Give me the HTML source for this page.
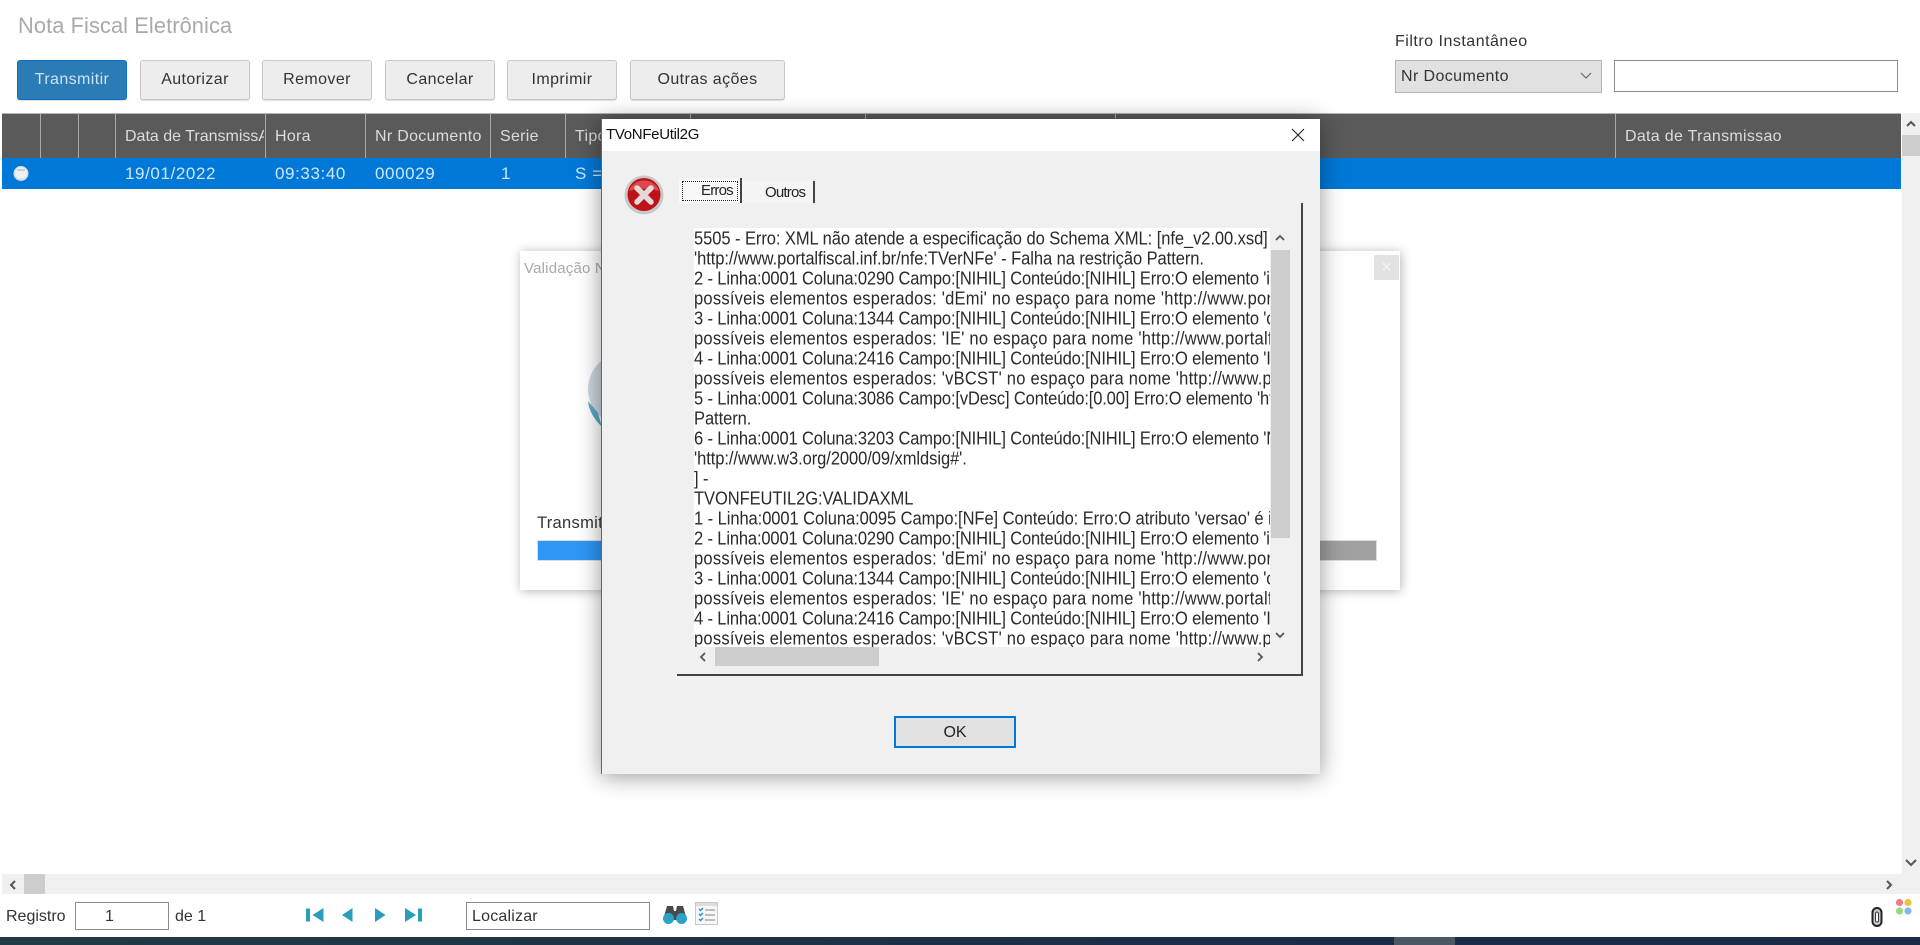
<!DOCTYPE html>
<html><head><meta charset="utf-8"><title>Nota Fiscal Eletrônica</title>
<style>
html,body{margin:0;padding:0;width:1920px;height:945px;overflow:hidden;background:#fff}
body{font-family:"Liberation Sans",Arial,sans-serif;position:relative;filter:blur(.35px)}
.a{position:absolute;white-space:nowrap}
.btn{position:absolute;top:60px;height:38px;line-height:37px;text-align:center;background:#ededed;border:1px solid #c8c8c8;border-radius:3px;box-shadow:0 1px 1px #ddd;font-size:16px;color:#333;box-sizing:content-box;letter-spacing:.4px}
.h{position:absolute;top:114px;height:44px;line-height:46px;font-size:16px;color:#dcdcdc;white-space:nowrap;overflow:hidden;letter-spacing:.3px}
.sep{position:absolute;top:114px;height:44px;width:1px;background:#a8a8a8}
.c{position:absolute;top:158px;height:31px;line-height:32px;font-size:17px;color:#cfe6fa;white-space:nowrap;letter-spacing:.6px}
.ln{position:absolute;left:0;width:576px;height:20px;line-height:20px;font-size:16.5px;letter-spacing:-.06px;color:#2a2a2a;white-space:nowrap;overflow:hidden}
.ln span{display:inline-block;transform:scaleY(1.1);transform-origin:50% 55%}
.l1{letter-spacing:-.14px}
.l2{letter-spacing:.24px}
</style></head><body>

<div class="a" style="left:18px;top:13px;font-size:21.8px;line-height:26px;color:#a9a9a9;letter-spacing:.1px">Nota Fiscal Eletrônica</div>

<div class="btn" style="left:17px;width:108px;background:#2a7bb6;border-color:#0f6cc4;color:#cfe3f2">Transmitir</div>
<div class="btn" style="left:140px;width:108px">Autorizar</div>
<div class="btn" style="left:262px;width:108px">Remover</div>
<div class="btn" style="left:385px;width:108px">Cancelar</div>
<div class="btn" style="left:507px;width:108px">Imprimir</div>
<div class="btn" style="left:630px;width:153px">Outras ações</div>

<div class="a" style="left:1395px;top:32px;font-size:16px;line-height:20px;color:#333;letter-spacing:.5px">Filtro Instantâneo</div>
<div class="a" style="left:1395px;top:60px;width:205px;height:31px;background:#e1e1e1;border:1px solid #b4b4b4;font-size:16px;line-height:31px;color:#333;text-indent:5px;letter-spacing:.4px">Nr Documento</div>
<svg class="a" style="left:1579px;top:70px" width="14" height="12"><path d="M2 3l5 5 5-5" fill="none" stroke="#666" stroke-width="1.2"/></svg>
<div class="a" style="left:1614px;top:60px;width:282px;height:30px;background:#fff;border:1.5px solid #8d8d8d"></div>

<!-- Grid -->
<div class="a" style="left:2px;top:113px;width:1899px;height:1px;background:#b5b5b5"></div>
<div class="a" style="left:2px;top:114px;width:1899px;height:44px;background:#5a5a5a"></div>
<div class="a" style="left:2px;top:158px;width:1899px;height:31px;background:#0078d7"></div>
<div class="sep" style="left:40px"></div><div class="sep" style="left:78px"></div><div class="sep" style="left:115px"></div><div class="sep" style="left:265px"></div><div class="sep" style="left:365px"></div><div class="sep" style="left:490px"></div><div class="sep" style="left:565px"></div><div class="sep" style="left:690px"></div><div class="sep" style="left:865px"></div><div class="sep" style="left:1115px"></div><div class="sep" style="left:1615px"></div>

<div class="h" style="left:125px;width:139px;letter-spacing:0">Data de TransmissAo</div>
<div class="h" style="left:275px;width:85px">Hora</div>
<div class="h" style="left:375px;width:114px">Nr Documento</div>
<div class="h" style="left:500px;width:60px">Serie</div>
<div class="h" style="left:575px;width:100px">Tipo</div>
<div class="h" style="left:1625px;width:250px">Data de Transmissao</div>

<svg class="a" style="left:11px;top:164px" width="20" height="20"><circle cx="10" cy="9.500" r="7.500" fill="#d8dde2"/><circle cx="10" cy="9" r="6" fill="#eef0f2"/><path d="M6 6h8" stroke="#a8b0b8" stroke-width="1"/></svg>
<div class="c" style="left:125px">19/01/2022</div>
<div class="c" style="left:275px">09:33:40</div>
<div class="c" style="left:375px">000029</div>
<div class="c" style="left:501px">1</div>
<div class="c" style="left:575px">S = S</div>

<!-- main scrollbars -->
<div class="a" style="left:1902px;top:113px;width:18px;height:761px;background:#f0f0f0"></div>
<div class="a" style="left:1902px;top:135px;width:18px;height:21px;background:#cdcdcd"></div>
<svg class="a" style="left:1904px;top:118px" width="14" height="12"><path d="M3 8l4-4 4 4" fill="none" stroke="#555" stroke-width="2"/></svg>
<svg class="a" style="left:1902px;top:857px" width="18" height="12"><path d="M4 3l5 5 5-5" fill="none" stroke="#555" stroke-width="2"/></svg>
<div class="a" style="left:2px;top:874px;width:1918px;height:20px;background:#f0f0f0"></div>
<div class="a" style="left:24px;top:874px;width:21px;height:20px;background:#cdcdcd"></div>
<svg class="a" style="left:6px;top:878px" width="14" height="14"><path d="M9 3L5 7l4 4" fill="none" stroke="#555" stroke-width="2"/></svg>
<svg class="a" style="left:1882px;top:878px" width="14" height="14"><path d="M5 3l4 4-4 4" fill="none" stroke="#555" stroke-width="2"/></svg>

<!-- footer -->
<div class="a" style="left:6px;top:907px;font-size:16px;line-height:20px;color:#333">Registro</div>
<div class="a" style="left:75px;top:902px;width:92px;height:26px;border:1px solid #8a8a8a;font-size:16px;line-height:28px;color:#333;text-indent:29px">1</div>
<div class="a" style="left:175px;top:907px;font-size:16px;line-height:20px;color:#333">de 1</div>
<svg class="a" style="left:300px;top:902px" width="130" height="26" viewBox="0 0 130 26">
<g fill="#2a9cbc"><rect x="6" y="6.500" width="4" height="13"/><path d="M23.500 6v14l-11-7z"/><path d="M52.500 6v14l-10.500-7z"/><path d="M75 6v14l10.500-7z"/><path d="M105 6v14l11-7z"/><rect x="118" y="6.500" width="4" height="13"/></g></svg>
<div class="a" style="left:466px;top:902px;width:182px;height:26px;border:1px solid #8a8a8a;font-size:16px;line-height:27px;color:#333;text-indent:5px;letter-spacing:.2px">Localizar</div>
<svg class="a" style="left:662px;top:902px" width="26" height="24" viewBox="0 0 26 24">
<path d="M5 4h6l1 5h2l1-5h6l4 14H1z" fill="#4a4a4e"/><circle cx="6.500" cy="16.500" r="5.500" fill="#2ba3c4"/><circle cx="19.500" cy="16.500" r="5.500" fill="#2ba3c4"/></svg>
<svg class="a" style="left:695px;top:902px" width="24" height="24" viewBox="0 0 24 24">
<rect x=".5" y=".5" width="22" height="22" fill="#f7f7f7" stroke="#c8c8c8"/><rect x="1" y="1" width="21" height="3" fill="#dcdcdc"/>
<path d="M4 7l1.500 1.500L8 6M4 12l1.500 1.500L8 11M4 17l1.500 1.500L8 16" fill="none" stroke="#2a90c8" stroke-width="1.500"/>
<path d="M10 8h10M10 13h10M10 18h10" stroke="#9a9a9a" stroke-width="1.200"/></svg>
<svg class="a" style="left:1870px;top:906px" width="14" height="22" viewBox="0 0 14 22">
<rect x="2.500" y="2" width="9" height="18" rx="4.500" fill="#c9cdd6" stroke="#222" stroke-width="2"/><rect x="5.500" y="6" width="3" height="10" rx="1.500" fill="#fff" stroke="#333"/></svg>
<svg class="a" style="left:1895px;top:898px" width="18" height="18" viewBox="0 0 18 18">
<circle cx="4.500" cy="4.500" r="3.600" fill="#ea7f86"/><circle cx="13" cy="4.500" r="3.600" fill="#efc23e"/><circle cx="4.500" cy="13" r="3.600" fill="#9bd67e"/><circle cx="13" cy="13" r="3.600" fill="#82b8e2"/></svg>
<div class="a" style="left:0;top:937px;width:1920px;height:8px;background:linear-gradient(90deg,#213a45,#1b2e45 60%,#1a2a47)"></div>
<div class="a" style="left:1394px;top:937px;width:61px;height:8px;background:#4a5866"></div>

<!-- background modal -->
<div class="a" style="left:520px;top:251px;width:880px;height:339px;background:#fff;box-shadow:1px 1px 10px rgba(0,0,0,.3);overflow:hidden">
  <div class="a" style="left:4px;top:8px;font-size:15px;line-height:20px;color:#a9a9a9;letter-spacing:.2px">Validação NF-e</div>
  <div class="a" style="left:854px;top:4px;width:25px;height:25px;background:#e2e2e2;color:#f4f4f4;text-align:center;font-size:18px;line-height:24px">×</div>
  <div class="a" style="left:68px;top:98px;width:90px;height:80px;border-radius:50%;background:#cdd6de"></div>
  <svg class="a" style="left:66px;top:150px" width="20" height="30"><path d="M2 0c1 10 6 18 14 26l-4-14z" fill="#5aa9c4"/></svg>
  <div class="a" style="left:797px;top:105px;width:3px;height:6px;background:#aaa"></div>
  <div class="a" style="left:17px;top:262px;font-size:16.5px;line-height:20px;color:#333;letter-spacing:.3px">Transmitindo</div>
  <div class="a" style="left:17px;top:289px;width:840px;height:21px;background:#a0a0a0;border:1px solid #ddd;box-sizing:border-box"></div>
  <div class="a" style="left:18px;top:290px;width:300px;height:19px;background:#2f96f5"></div>
</div>

<!-- dialog -->
<div class="a" style="left:601px;top:119px;width:719px;height:655px;background:#f0f0f0;box-shadow:0 2px 22px rgba(0,0,0,.42);overflow:hidden;border-left:1px solid #666;box-sizing:border-box">
  <div class="a" style="left:0;top:0;width:718px;height:32px;background:#fff"></div>
  <div class="a" style="left:4px;top:6px;font-size:15px;line-height:20px;color:#111;letter-spacing:-.3px">TVoNFeUtil2G</div>
  <svg class="a" style="left:689px;top:9px" width="14" height="14"><path d="M1 1l12 12M13 1L1 13" stroke="#222" stroke-width="1.100"/></svg>

  <svg class="a" style="left:22px;top:56px" width="40" height="40" viewBox="0 0 40 40">
    <circle cx="20" cy="20" r="19.500" fill="#c8c8c8"/><circle cx="20" cy="19.500" r="16.500" fill="#bd1217"/><path d="M5 16a15.500 14 0 0 1 30 0c-8-3-22-3-30 0z" fill="#d84a4d"/>
    <path d="M13 13l14 14M27 13L13 27" stroke="#e2dada" stroke-width="5.500" stroke-linecap="round"/></svg>

  <div class="a" style="left:77px;top:59px;width:61px;height:25px;background:#f8f8f8"></div>
  <div class="a" style="left:138px;top:59px;width:2px;height:25px;background:#444"></div>
  <div class="a" style="left:80px;top:62px;width:54px;height:18px;border:1px dotted #222"></div>
  <div class="a" style="left:99px;top:62px;font-size:15px;line-height:20px;letter-spacing:-.8px;color:#222">Erros</div>
  <div class="a" style="left:140px;top:62px;width:71px;height:22px;background:#f4f4f4"></div>
  <div class="a" style="left:211px;top:62px;width:2px;height:22px;background:#444"></div>
  <div class="a" style="left:163px;top:64px;font-size:15px;line-height:20px;letter-spacing:-.8px;color:#222">Outros</div>

  <div class="a" style="left:699px;top:84px;width:2px;height:473px;background:#444"></div>
  <div class="a" style="left:75px;top:555px;width:626px;height:2px;background:#444"></div>

  <div class="a" style="left:92px;top:109px;width:576px;height:419px;background:#fff;overflow:hidden">
    <div class="ln" style="top:1px"><span>5505 - Erro: XML não atende a especificação do Schema XML: [nfe_v2.00.xsd]</span></div>
    <div class="ln" style="top:21px"><span>'http://www.portalfiscal.inf.br/nfe:TVerNFe' - Falha na restrição Pattern.</span></div>
    <div class="ln l1" style="top:41px"><span>2 - Linha:0001 Coluna:0290 Campo:[NIHIL] Conteúdo:[NIHIL] Erro:O elemento 'ide'</span></div>
    <div class="ln l2" style="top:61px"><span>possíveis elementos esperados: 'dEmi' no espaço para nome 'http://www.portalfiscal</span></div>
    <div class="ln l1" style="top:81px"><span>3 - Linha:0001 Coluna:1344 Campo:[NIHIL] Conteúdo:[NIHIL] Erro:O elemento 'cUF'</span></div>
    <div class="ln l2" style="top:101px"><span>possíveis elementos esperados: 'IE' no espaço para nome 'http://www.portalfiscal</span></div>
    <div class="ln l1" style="top:121px"><span>4 - Linha:0001 Coluna:2416 Campo:[NIHIL] Conteúdo:[NIHIL] Erro:O elemento 'ICMS'</span></div>
    <div class="ln l2" style="top:141px"><span>possíveis elementos esperados: 'vBCST' no espaço para nome 'http://www.portalfiscal</span></div>
    <div class="ln l1" style="top:161px"><span>5 - Linha:0001 Coluna:3086 Campo:[vDesc] Conteúdo:[0.00] Erro:O elemento 'http'</span></div>
    <div class="ln" style="top:181px"><span>Pattern.</span></div>
    <div class="ln l1" style="top:201px"><span>6 - Linha:0001 Coluna:3203 Campo:[NIHIL] Conteúdo:[NIHIL] Erro:O elemento 'NFe'</span></div>
    <div class="ln" style="top:221px"><span>'http://www.w3.org/2000/09/xmldsig#'.</span></div>
    <div class="ln" style="top:241px"><span>] -</span></div>
    <div class="ln" style="top:261px"><span>TVONFEUTIL2G:VALIDAXML</span></div>
    <div class="ln" style="top:281px"><span>1 - Linha:0001 Coluna:0095 Campo:[NFe] Conteúdo: Erro:O atributo 'versao' é inválido</span></div>
    <div class="ln l1" style="top:301px"><span>2 - Linha:0001 Coluna:0290 Campo:[NIHIL] Conteúdo:[NIHIL] Erro:O elemento 'ide'</span></div>
    <div class="ln l2" style="top:321px"><span>possíveis elementos esperados: 'dEmi' no espaço para nome 'http://www.portalfiscal</span></div>
    <div class="ln l1" style="top:341px"><span>3 - Linha:0001 Coluna:1344 Campo:[NIHIL] Conteúdo:[NIHIL] Erro:O elemento 'cUF'</span></div>
    <div class="ln l2" style="top:361px"><span>possíveis elementos esperados: 'IE' no espaço para nome 'http://www.portalfiscal</span></div>
    <div class="ln l1" style="top:381px"><span>4 - Linha:0001 Coluna:2416 Campo:[NIHIL] Conteúdo:[NIHIL] Erro:O elemento 'ICMS'</span></div>
    <div class="ln l2" style="top:401px"><span>possíveis elementos esperados: 'vBCST' no espaço para nome 'http://www.portalfiscal</span></div>
  </div>

  <div class="a" style="left:669px;top:131px;width:19px;height:288px;background:#cdcdcd"></div>
  <svg class="a" style="left:671px;top:113px" width="14" height="12"><path d="M3 8l4-4 4 4" fill="none" stroke="#555" stroke-width="1.800"/></svg>
  <svg class="a" style="left:671px;top:511px" width="14" height="12"><path d="M3 3l4 4 4-4" fill="none" stroke="#555" stroke-width="1.800"/></svg>
  <div class="a" style="left:113px;top:528px;width:164px;height:19px;background:#cdcdcd"></div>
  <svg class="a" style="left:95px;top:531px" width="12" height="14"><path d="M8 3L4 7l4 4" fill="none" stroke="#555" stroke-width="1.800"/></svg>
  <svg class="a" style="left:652px;top:531px" width="12" height="14"><path d="M4 3l4 4-4 4" fill="none" stroke="#555" stroke-width="1.800"/></svg>

  <div class="a" style="left:292px;top:597px;width:118px;height:28px;background:#e1e1e1;border:2px solid #0078d7;text-align:center;font-size:16px;line-height:29px;color:#222">OK</div>
</div>
</body></html>
